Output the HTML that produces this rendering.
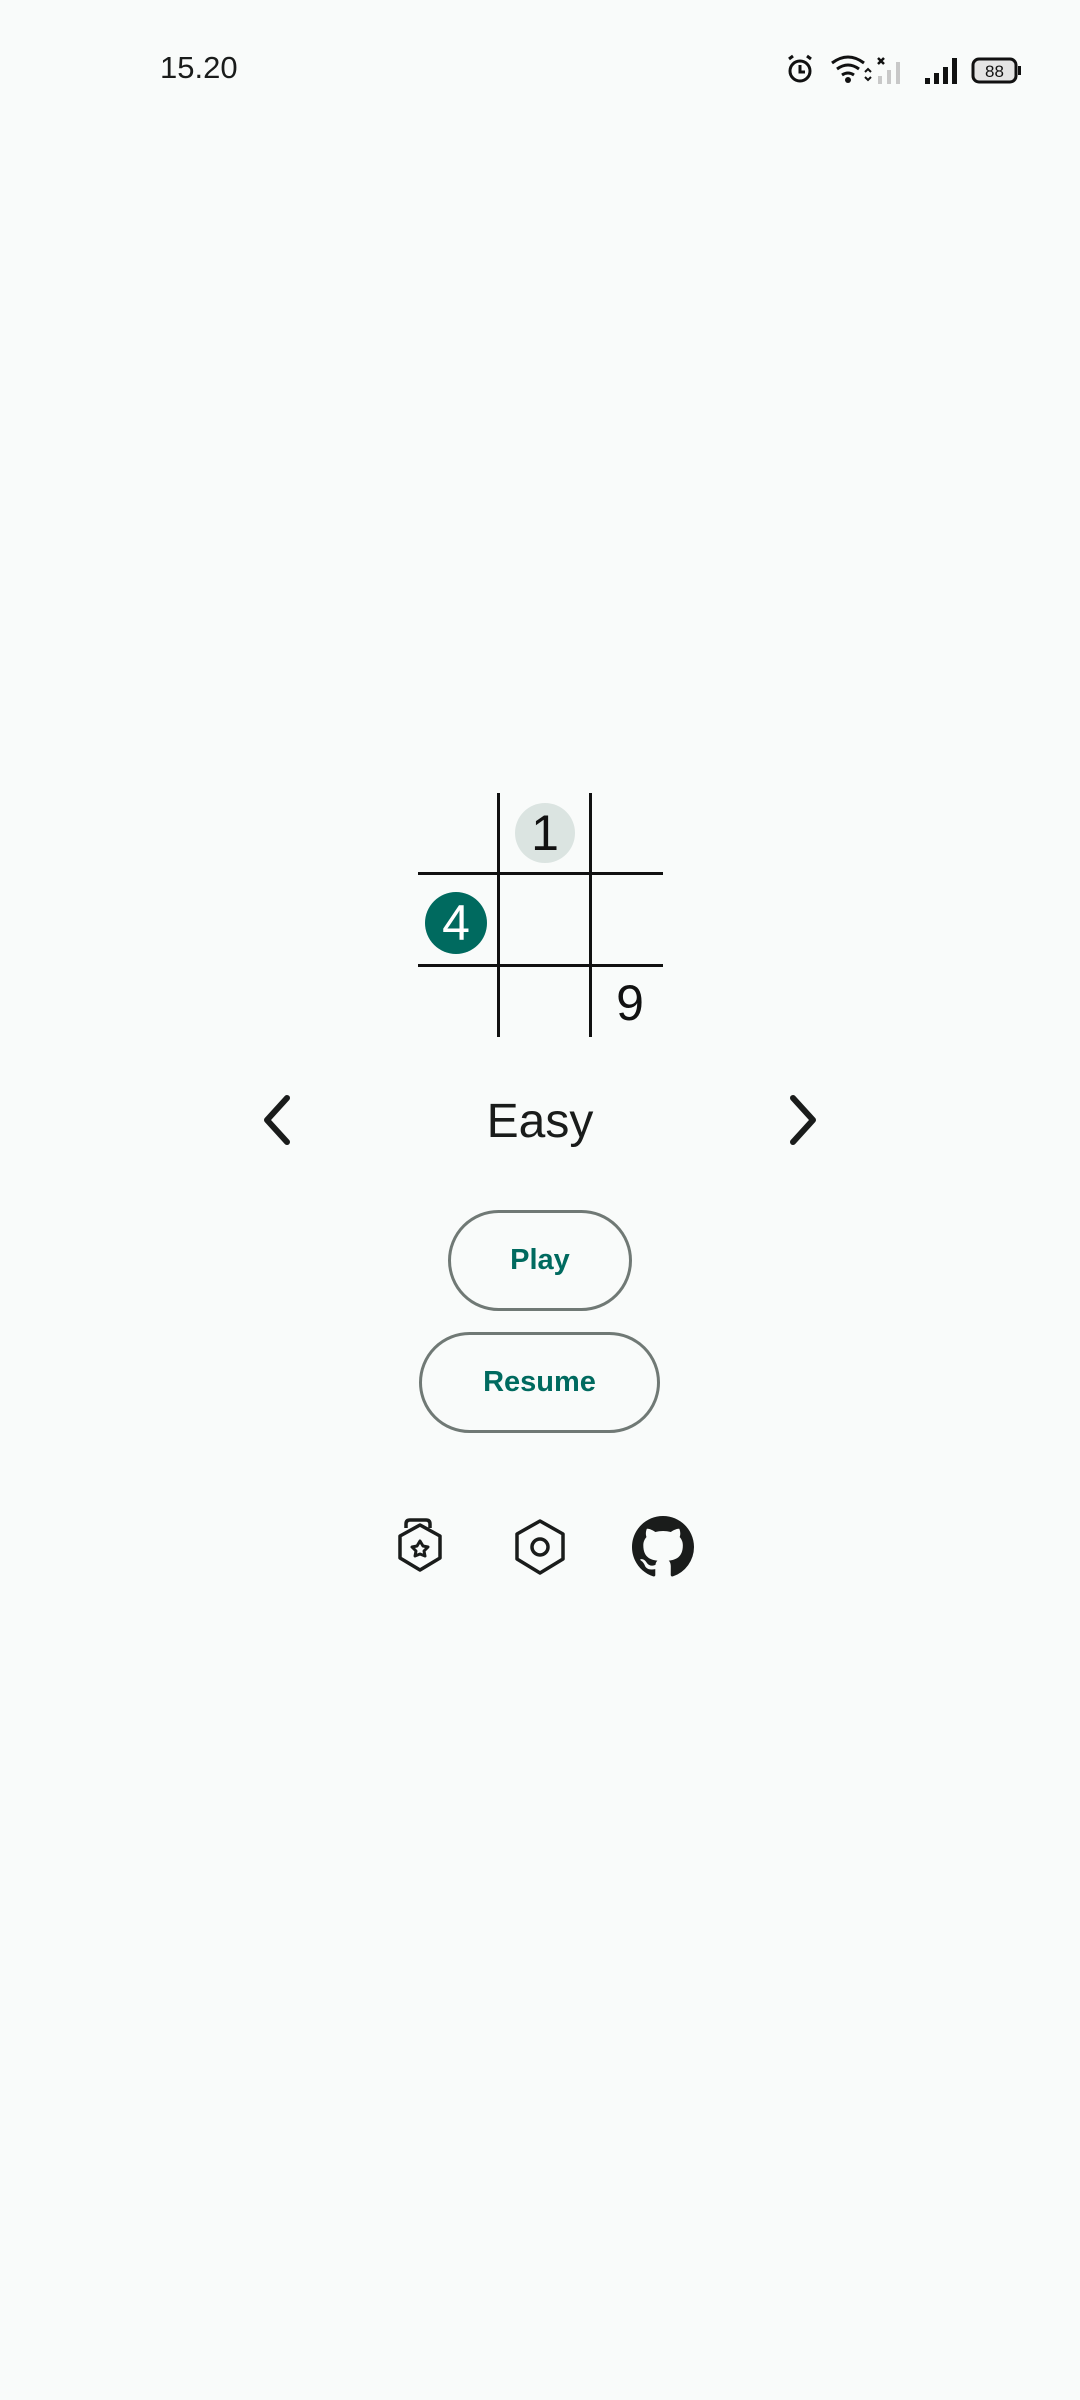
<!DOCTYPE html>
<html><head><meta charset="utf-8">
<style>
html,body{margin:0;padding:0;}
body{width:1080px;height:2400px;background:#f9fbfa;position:relative;overflow:hidden;font-family:"Liberation Sans",sans-serif;color:#1a1c1b;}
.abs{position:absolute;}
.btn{position:absolute;border:3px solid #707975;border-radius:60px;box-sizing:border-box;color:#006a5f;font-weight:600;font-size:29px;display:flex;align-items:center;justify-content:center;}
</style></head><body>
<div class="abs" style="left:160px;top:50px;font-size:31px;">15.20</div>
<svg class="abs" style="left:780px;top:50px" width="250" height="40" viewBox="0 0 250 40">
 <g fill="none" stroke="#111" stroke-width="3">
  <circle cx="20" cy="21" r="10"/><path d="M20 15v7h5M9 9l4-3M31 9l-4-3"/>
  <path d="M52 13q16-12 32 0M57 19q11-8 22 0M62 25q6-4 12 0"/>
 </g>
 <circle cx="68" cy="30" r="3" fill="#111"/>
 <path d="M85 22l3-3 3 3M85 27l3 3 3-3" stroke="#111" stroke-width="2" fill="none"/>
 <path d="M98 8l6 6M104 8l-6 6" stroke="#111" stroke-width="2.5"/>
 <g fill="#c8c8c8"><rect x="98" y="26" width="4" height="8"/><rect x="107" y="20" width="4" height="14"/><rect x="116" y="12" width="4" height="22"/></g>
 <g fill="#111"><rect x="145" y="28" width="5" height="6"/><rect x="154" y="23" width="5" height="11"/><rect x="163" y="17" width="5" height="17"/><rect x="172" y="8" width="5" height="26"/></g>
 <rect x="193" y="9" width="43" height="23" rx="6" fill="#e4e4e4" stroke="#111" stroke-width="3"/>
 <rect x="238" y="16" width="3" height="9" fill="#111"/>
 <text x="214.5" y="27" font-size="17" text-anchor="middle" fill="#111" font-family="Liberation Sans">88</text>
</svg>

<div class="abs" style="left:497px;top:793px;width:3px;height:244px;background:#111"></div>
<div class="abs" style="left:589px;top:793px;width:3px;height:244px;background:#111"></div>
<div class="abs" style="left:418px;top:872px;width:245px;height:3px;background:#111"></div>
<div class="abs" style="left:418px;top:964px;width:245px;height:3px;background:#111"></div>
<div class="abs" style="left:515px;top:803px;width:60px;height:60px;border-radius:50%;background:#dbe4e1;"></div>
<div class="abs" style="left:515px;top:803px;width:60px;height:60px;line-height:60px;text-align:center;font-size:50px;color:#111;">1</div>
<div class="abs" style="left:425px;top:892px;width:62px;height:62px;border-radius:50%;background:#006a5f;color:#fff;line-height:62px;text-align:center;font-size:50px;">4</div>
<div class="abs" style="left:600px;top:973px;width:60px;height:60px;line-height:60px;text-align:center;font-size:50px;color:#111;">9</div>

<svg class="abs" style="left:255px;top:1090px" width="45" height="62"><path d="M32 8L12 30l20 22" fill="none" stroke="#1a1c1b" stroke-width="6" stroke-linecap="round" stroke-linejoin="round"/></svg>
<svg class="abs" style="left:780px;top:1090px" width="45" height="62"><path d="M13 8l20 22-20 22" fill="none" stroke="#1a1c1b" stroke-width="6" stroke-linecap="round" stroke-linejoin="round"/></svg>
<div class="abs" style="left:390px;top:1091px;width:300px;text-align:center;font-size:48px;line-height:62px;">Easy</div>

<div class="btn" style="left:448px;top:1210px;width:184px;height:101px;">Play</div>
<div class="btn" style="left:419px;top:1332px;width:241px;height:101px;">Resume</div>

<svg class="abs" style="left:392px;top:1514px" width="56" height="64" viewBox="0 0 56 64">
 <g fill="none" stroke="#1a1c1b" stroke-width="3.5" stroke-linejoin="round">
  <path d="M14 14V10q0-4 4-4h16q4 0 4 4v4"/>
  <path d="M28 11l20 11v22L28 56 8 44V22z"/>
  <path d="M28 27l3 5 5 1-4 4 1 5-5-2-5 2 1-5-4-4 5-1z" stroke-width="3"/>
 </g>
</svg>
<svg class="abs" style="left:510px;top:1515px" width="60" height="64" viewBox="0 0 60 64">
 <g fill="none" stroke="#1a1c1b" stroke-width="3.5" stroke-linejoin="round">
  <path d="M30 6l23 13v25L30 58 7 44V19z"/>
  <circle cx="30" cy="32" r="8"/>
 </g>
</svg>
<svg class="abs" style="left:632px;top:1516px" width="62" height="62" viewBox="0 0 16 16">
 <path fill="#1a1c1b" d="M8 0C3.58 0 0 3.58 0 8c0 3.54 2.29 6.53 5.47 7.59.4.07.55-.17.55-.38 0-.19-.01-.82-.01-1.49-2.01.37-2.53-.49-2.69-.94-.09-.23-.48-.94-.82-1.13-.28-.15-.68-.52-.01-.53.63-.01 1.08.58 1.23.82.72 1.21 1.87.87 2.33.66.07-.52.28-.87.51-1.07-1.78-.2-3.64-.89-3.64-3.95 0-.87.31-1.59.82-2.15-.08-.2-.36-1.02.08-2.12 0 0 .67-.21 2.2.82.64-.18 1.32-.27 2-.27.68 0 1.36.09 2 .27 1.53-1.04 2.2-.82 2.2-.82.44 1.1.16 1.92.08 2.12.51.56.82 1.27.82 2.15 0 3.07-1.87 3.75-3.65 3.95.29.25.54.73.54 1.48 0 1.07-.01 1.93-.01 2.2 0 .21.15.46.55.38A8.013 8.013 0 0016 8c0-4.42-3.58-8-8-8z"/>
</svg>
</body></html>
